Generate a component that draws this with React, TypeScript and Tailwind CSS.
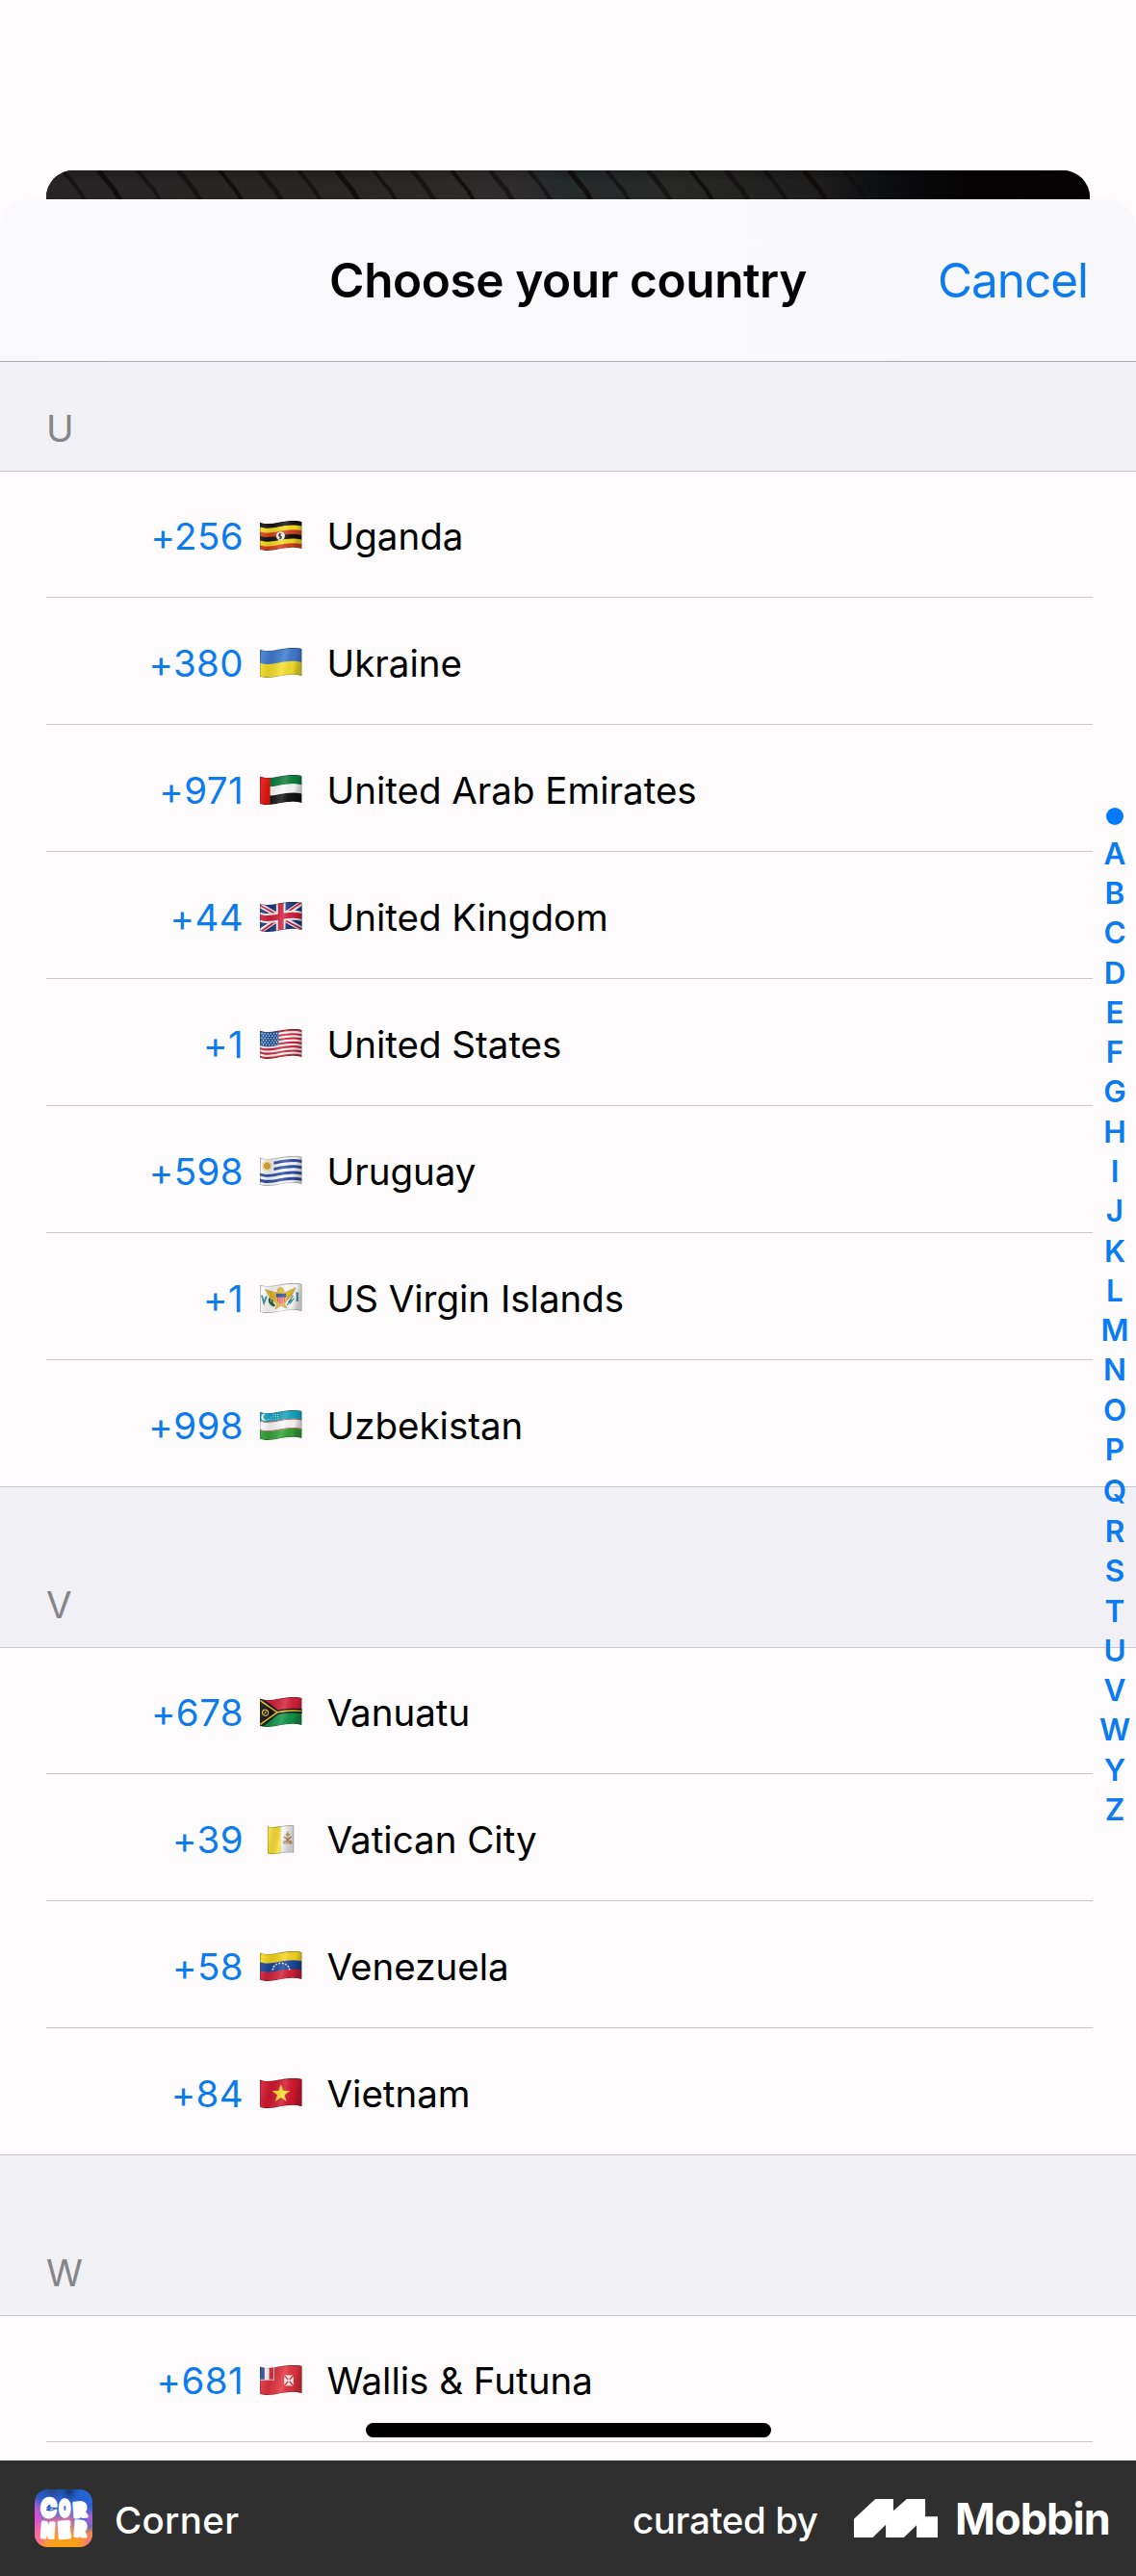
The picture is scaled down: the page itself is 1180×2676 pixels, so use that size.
import React, { useId } from "react";

/* ---------- flags ---------- */

const FLAG_W = 43.5;
const FLAG_H = 28;

// A horizontal band that follows the ripple of the flag cloth.
function band(y0: number, y1: number, h = 1) {
  return [
    `M0 ${y0 + 1.8}`,
    `C13 ${y0 + 1.8 + 4.6 * h} 26 ${y0 + 1.8 - 5 * h} ${FLAG_W} ${y0 + 0.9}`,
    `V${y1 + 0.9}`,
    `C26 ${y1 + 1.8 - 5 * h} 13 ${y1 + 1.8 + 4.6 * h} 0 ${y1 + 1.8}Z`,
  ].join("");
}

function Bands({ colors }: { colors: string[] }) {
  const step = FLAG_H / colors.length;
  return (
    <>
      {colors.map((c, i) => (
        <path key={i} d={band(i * step, (i + 1) * step + (i < colors.length - 1 ? 0.4 : 0))} fill={c} />
      ))}
    </>
  );
}

function starPoints(cx: number, cy: number, r: number, n = 5, inner = 0.4) {
  return Array.from({ length: n * 2 }, (_, i) => {
    const a = (Math.PI * i) / n - Math.PI / 2;
    const q = i % 2 ? r * inner : r;
    return `${(cx + q * Math.cos(a)).toFixed(2)},${(cy + q * Math.sin(a)).toFixed(2)}`;
  }).join(" ");
}

function Cloth({ children }: { children: React.ReactNode }) {
  const id = useId().replace(/[^a-zA-Z0-9]/g, "");
  return (
    <svg viewBox="0 0 43.5 32" className="h-8 w-[43.5px] shrink-0">
      <defs>
        <clipPath id={`c${id}`}>
          <path d={band(0, FLAG_H)} />
        </clipPath>
        <linearGradient id={`g${id}`} x1="0" x2="1" y1="0" y2="0.15">
          <stop offset="0" stopColor="#000" stopOpacity="0.12" />
          <stop offset="0.08" stopColor="#fff" stopOpacity="0.1" />
          <stop offset="0.3" stopColor="#000" stopOpacity="0.1" />
          <stop offset="0.62" stopColor="#fff" stopOpacity="0.16" />
          <stop offset="0.85" stopColor="#000" stopOpacity="0.04" />
          <stop offset="1" stopColor="#000" stopOpacity="0.25" />
        </linearGradient>
      </defs>
      <g clipPath={`url(#c${id})`}>
        {children}
        <rect width="43.5" height="32" fill={`url(#g${id})`} />
        <path d={band(0, FLAG_H)} fill="none" stroke="#000" strokeOpacity="0.32" strokeWidth="1.3" />
      </g>
    </svg>
  );
}

const Uganda = () => (
  <Cloth>
    <Bands colors={["#161412", "#f8dc1c", "#d5401c", "#161412", "#f8dc1c", "#d5401c"]} />
    <circle cx="21.4" cy="15.8" r="4.5" fill="#f4f1ee" />
    <path d="M20 12.8l2.6.6-1.3 1.8 2 1.7-1.5 2.3-2.2-.3 1.2-1.6-1.8-1.6z" fill="#3a3230" />
    <path d="M20.2 12.6l1.8.3-.8 1z" fill="#d5401c" />
  </Cloth>
);

const Ukraine = () => (
  <Cloth>
    <Bands colors={["#3f7bd0", "#f6df2a"]} />
  </Cloth>
);

const Emirates = () => (
  <Cloth>
    <Bands colors={["#0d7f3f", "#fbfbfb", "#141414"]} />
    <rect width="10.6" height="32" fill="#e3120b" />
  </Cloth>
);

const Kingdom = () => (
  <Cloth>
    <rect width="44" height="32" fill="#1b3a83" />
    <path d="M0 3.5L43.5 28M0 30.5L43.5 1" stroke="#f6f3f5" strokeWidth="5" />
    <path d="M0 3.5L21 15M43.5 28L22 17M0 31.3L20 17.5M43.5 0.3L24 13.5" stroke="#d3213d" strokeWidth="1.9" />
    <rect x="16.9" width="9.6" height="32" fill="#f6f3f5" />
    <path d={band(9, 19)} fill="#f6f3f5" />
    <rect x="18.8" width="5.8" height="32" fill="#d3213d" />
    <path d={band(11, 17)} fill="#d3213d" />
  </Cloth>
);

const States = () => {
  const id = useId().replace(/[^a-zA-Z0-9]/g, "");
  return (
    <Cloth>
      <Bands
        colors={Array.from({ length: 13 }, (_, i) => (i % 2 ? "#fbf7f8" : "#cf2338"))}
      />
      <clipPath id={id}>
        <rect width="19.4" height="32" />
      </clipPath>
      <g clipPath={`url(#${id})`}>
        <path d={band(0, 15.1)} fill="#24599f" />
        {Array.from({ length: 6 }, (_, r) =>
          Array.from({ length: 6 }, (_, c) => (
            <circle
              key={`${r}-${c}`}
              cx={2 + c * 3.1 + (r % 2 ? 1.5 : 0)}
              cy={4.5 + r * 2.3 + Math.sin(c / 1.6) * 0.5}
              r="0.66"
              fill="#fff"
            />
          ))
        )}
      </g>
    </Cloth>
  );
};

const Uruguay = () => {
  const id = useId().replace(/[^a-zA-Z0-9]/g, "");
  return (
    <Cloth>
      <Bands
        colors={["#fafafa", "#2d4ea6", "#fafafa", "#2d4ea6", "#fafafa", "#2d4ea6", "#fafafa", "#2d4ea6", "#fafafa"]}
      />
      <clipPath id={id}>
        <rect width="14.4" height="32" />
      </clipPath>
      <g clipPath={`url(#${id})`}>
        <path d={band(0, 15.6)} fill="#f7f7f7" />
      </g>
      <polygon points={starPoints(7.2, 10.2, 6, 12, 0.5)} fill="#e3b431" />
      <circle cx="7.2" cy="10.2" r="2.7" fill="#dba521" stroke="#a87c22" strokeWidth="0.5" />
    </Cloth>
  );
};

const VirginIslands = () => (
  <Cloth>
    <rect width="44" height="32" fill="#fbfbfa" />
    <path d="M1.8 12.5L4.2 20.5L6.8 13.5" fill="none" stroke="#3c8ba3" strokeWidth="1.9" />
    <path d="M38.8 10V18.4" stroke="#3c8ba3" strokeWidth="2" />
    <path d="M37.3 10h3M37.3 18.3h3" stroke="#3c8ba3" strokeWidth="0.8" />
    <path
      d="M5.5 6.5L16.5 10 18.5 8.6 18.8 5.8 21.8 4.3 25 6.6 24.6 9 26.8 9.6 37 4.8 33.5 12.3 27.5 18.5 25.5 22 28 26 21.8 23.2 16 27 17.8 21.6 11.5 16.5z"
      fill="#ecc02c"
      stroke="#a57f22"
      strokeWidth="0.5"
    />
    <path d="M8.5 8.5l8 6M11 12.8l6 4M35 7.5l-7 7M33 12l-5 4" stroke="#b48c22" strokeWidth="0.6" />
    <path d="M17.2 13.5h9.6c.2 4.5-1.4 7.4-4.8 8.8-3.4-1.4-5-4.3-4.8-8.8z" fill="#f2a8ac" />
    <path d="M18.7 14v5.5M20.8 14v7.5M23 14v7.5M25.2 14v5.5" stroke="#d93b47" strokeWidth="0.9" />
    <path d="M16.8 10.8h10.4v3.6H16.8z" fill="#2c4f96" />
    <path d="M10.2 15.5c-1.2 3 0 6.4 4.6 8.2M12.5 17c-.4 3 .6 5.2 3.2 6.2" fill="none" stroke="#2a6136" strokeWidth="2" />
    <path d="M34.5 13l-5.2 7.2M35.5 15.5l-4.5 6M33 17l-5 6" stroke="#2f819b" strokeWidth="1.1" />
  </Cloth>
);

const Uzbekistan = () => (
  <Cloth>
    <path d={band(0, 28)} fill="#fbfbfb" />
    <path d={band(0, 9)} fill="#16a3bd" />
    <path d={band(9, 9.7)} fill="#c4434b" />
    <path d={band(18.2, 18.9)} fill="#c4434b" />
    <path d={band(18.9, 28)} fill="#34a236" />
    <circle cx="5" cy="7.2" r="3.5" fill="#fff" />
    <circle cx="6.5" cy="7" r="3" fill="#16a3bd" />
    {[0, 1, 2, 3, 4].map((c) =>
      [0, 1, 2].map((r) =>
        c + r > 1 ? <circle key={`${c}${r}`} cx={9 + c * 2.4} cy={9.4 - (2 - r) * 2.3 - c * 0.15} r="0.55" fill="#e8fbff" /> : null
      )
    )}
  </Cloth>
);

const Vanuatu = () => (
  <Cloth>
    <Bands colors={["#d5203a", "#119447"]} />
    <path d="M-2 .5L19.5 16.2 L-2 32z" fill="#141312" />
    <path d="M-1 1L18 15.8C27 13.8 33 13.2 44 14.6M-1 31L18 15.8" fill="none" stroke="#141312" strokeWidth="4.6" />
    <path d="M-1 2.6L18 15.8C27 13.8 33 13.2 44 14.6M-1 29.4L18 15.8" fill="none" stroke="#f5cd2c" strokeWidth="1.5" />
    <circle cx="5.6" cy="16.2" r="3.1" fill="none" stroke="#e7c02c" strokeWidth="1.2" />
    <path d="M4.3 18l2.4-3.6M5 15l1.5 2" stroke="#e7c02c" strokeWidth="0.8" />
  </Cloth>
);

const Vatican = () => (
  <svg viewBox="0 0 43.5 32" className="h-8 w-[43.5px] shrink-0">
    <defs>
      <clipPath id="vatican-cloth">
        <path d="M8 2.2C14 5 23 .3 35.2 1.5V29.6C24 28.2 15 32.8 8 30.6Z" />
      </clipPath>
      <linearGradient id="vatican-shade" x1="0.18" x2="0.81" y1="0" y2="0.1">
        <stop offset="0" stopColor="#000" stopOpacity="0.15" />
        <stop offset="0.1" stopColor="#fff" stopOpacity="0.15" />
        <stop offset="0.35" stopColor="#000" stopOpacity="0.08" />
        <stop offset="0.6" stopColor="#fff" stopOpacity="0.2" />
        <stop offset="1" stopColor="#000" stopOpacity="0.2" />
      </linearGradient>
    </defs>
    <g clipPath="url(#vatican-cloth)">
      <rect x="8" width="14" height="32" fill="#f8de35" />
      <rect x="21.8" width="14" height="32" fill="#f8f8f8" />
      <path d="M28.8 7.5v4M26.8 11.2q2-3.4 4 0z" stroke="#b99443" strokeWidth="1" fill="#d9b45a" />
      <path d="M25 19.5l7.5-6.5M32.5 19.5L25 13" stroke="#b58c4b" strokeWidth="1.4" />
      <path d="M25.2 13.5l3.6 2.6 3.6-2.6M28.8 12v9" stroke="#c0695a" strokeWidth="0.9" fill="none" />
      <circle cx="25.8" cy="18.8" r="1.5" fill="none" stroke="#a9a48f" strokeWidth="0.9" />
      <circle cx="31.8" cy="18.8" r="1.5" fill="none" stroke="#c29b4a" strokeWidth="0.9" />
      <rect width="43.5" height="32" fill="url(#vatican-shade)" />
      <path d="M8 2.2C14 5 23 .3 35.2 1.5V29.6C24 28.2 15 32.8 8 30.6Z" fill="none" stroke="#000" strokeOpacity="0.35" strokeWidth="1.2" />
    </g>
  </svg>
);

const Venezuela = () => (
  <Cloth>
    <Bands colors={["#f8d51c", "#1c479c", "#d3203a"]} />
    {Array.from({ length: 8 }, (_, i) => {
      const a = Math.PI + (Math.PI * (i + 0.3)) / 7.6;
      return (
        <polygon
          key={i}
          points={starPoints(22 + 8.6 * Math.cos(a), 20 + 7.2 * Math.sin(a) - 0.5, 1.5)}
          fill="#fff"
        />
      );
    })}
  </Cloth>
);

const Vietnam = () => (
  <Cloth>
    <rect width="44" height="32" fill="#d3172e" />
    <polygon points={starPoints(21.8, 16, 10)} fill="#fbd92c" />
  </Cloth>
);

const Wallis = () => (
  <Cloth>
    <rect width="44" height="32" fill="#e2323f" />
    <rect width="15" height="15.6" fill="#fbf5f6" />
    <rect width="4.8" height="14.8" fill="#2b4c9c" />
    <rect x="9.6" width="4.6" height="14.8" fill="#e2323f" />
    <rect x="25.2" y="10.4" width="9.6" height="11" fill="#fbf3f3" />
    <path d="M25.2 10.4l9.6 11M34.8 10.4l-9.6 11" stroke="#e2323f" strokeWidth="1.5" />
    <circle cx="30" cy="15.9" r="1.3" fill="#fbf3f3" />
  </Cloth>
);

/* ---------- data ---------- */

type Country = { code: string; name: string; Flag: () => React.ReactElement };

const sections: { letter: string; countries: Country[] }[] = [
  {
    letter: "U",
    countries: [
      { code: "+256", name: "Uganda", Flag: Uganda },
      { code: "+380", name: "Ukraine", Flag: Ukraine },
      { code: "+971", name: "United Arab Emirates", Flag: Emirates },
      { code: "+44", name: "United Kingdom", Flag: Kingdom },
      { code: "+1", name: "United States", Flag: States },
      { code: "+598", name: "Uruguay", Flag: Uruguay },
      { code: "+1", name: "US Virgin Islands", Flag: VirginIslands },
      { code: "+998", name: "Uzbekistan", Flag: Uzbekistan },
    ],
  },
  {
    letter: "V",
    countries: [
      { code: "+678", name: "Vanuatu", Flag: Vanuatu },
      { code: "+39", name: "Vatican City", Flag: Vatican },
      { code: "+58", name: "Venezuela", Flag: Venezuela },
      { code: "+84", name: "Vietnam", Flag: Vietnam },
    ],
  },
  { letter: "W", countries: [{ code: "+681", name: "Wallis & Futuna", Flag: Wallis }] },
];

const indexLetters = "ABCDEFGHIJKLMNOPQRSTUVWYZ".split("");

/* ---------- pieces ---------- */

// The top edge of the photo card behind the sheet: dark slats fading to black.
function PhotoCard() {
  const slats = [68, 105, 146, 188, 231, 272, 313, 352, 391, 431, 472, 512, 552, 594, 633, 676, 720, 757, 797, 838, 880];
  return (
    <div className="ml-12 mr-[48.5px] h-[30px] overflow-hidden rounded-t-[28px] bg-[#232122]">
      <svg viewBox="48 0 1084 30" className="block h-[30px] w-[1084px]">
        <defs>
          <linearGradient id="card" x1="0" x2="1">
            <stop offset="0" stopColor="#262425" />
            <stop offset="0.25" stopColor="#272624" />
            <stop offset="0.45" stopColor="#2e2c2c" />
            <stop offset="0.5" stopColor="#252a2b" />
            <stop offset="0.6" stopColor="#282827" />
            <stop offset="0.74" stopColor="#1d1d1d" />
            <stop offset="0.8" stopColor="#0d0e10" />
            <stop offset="0.88" stopColor="#050304" />
            <stop offset="1" stopColor="#040203" />
          </linearGradient>
          <linearGradient id="cardTop" x1="0" x2="0" y1="0" y2="1">
            <stop offset="0" stopColor="#000" stopOpacity="0.2" />
            <stop offset="0.4" stopColor="#000" stopOpacity="0" />
          </linearGradient>
        </defs>
        <rect x="48" width="1084" height="30" fill="url(#card)" />
        {slats.map((x, i) => (
          <path
            key={x}
            d={`M${x - 3} 0C${x + 4} 8 ${x + 8} ${13 + (i % 3)} ${x + 11} 17S${x + 17} 26 ${x + 20} 31`}
            fill="none"
            stroke="#0f0d0c"
            strokeOpacity={i % 3 === 1 ? 0.9 : 0.65}
            strokeWidth={i % 2 ? 5 : 4}
          />
        ))}
        <rect x="48" width="1084" height="30" fill="url(#cardTop)" />
      </svg>
    </div>
  );
}

function SectionHeader({ letter, first }: { letter: string; first: boolean }) {
  return (
    <div
      className={`flex items-end border-b border-[#c8c7cc] bg-[#f1f0f5] pb-[21px] pl-12 ${first ? "h-[114px]" : "h-[167px]"}`}
    >
      <span className="text-[38.5px] leading-[46px] text-[#85858a]">{letter}</span>
    </div>
  );
}

function CountryRow({ country, first, last }: { country: Country; first: boolean; last: boolean }) {
  const { code, name, Flag } = country;
  return (
    <div className={last ? "border-b border-[#c6c6ca]" : "ml-12 mr-[45px] border-b border-[#c6c6c8]"}>
      <div className={`flex items-end pb-10 text-[38.5px] leading-[46px] ${first ? "h-[130px]" : "h-[131px]"}`}>
        <span
          className={`shrink-0 text-right tracking-[0.4px] text-[#0b7bee] ${last ? "w-[253px]" : "ml-0 w-[205px]"}`}
        >
          {code}
        </span>
        <span className="ml-[17px] flex h-[46px] shrink-0 items-center">
          <Flag />
        </span>
        <span className="ml-[26px] text-black">{name}</span>
      </div>
    </div>
  );
}

function IndexRail() {
  return (
    <nav className="absolute right-0 top-[839px] flex w-11 flex-col items-center font-semibold text-[#0a7bf2]">
      <span className="mb-[9px] size-[18px] rounded-full bg-[#007aff]" />
      {indexLetters.map((l) => (
        <span
          key={l}
          className={`flex items-center justify-center text-[31.5px] leading-none ${l === "Q" ? "h-[44px]" : "h-[41.27px]"}`}
        >
          {l}
        </span>
      ))}
    </nav>
  );
}

function CornerIcon() {
  return (
    <svg viewBox="0 0 60 60" className="size-[60px] shrink-0">
      <defs>
        <clipPath id="tile">
          <rect width="60" height="60" rx="13.5" />
        </clipPath>
        <linearGradient id="tileBase" x1="0" x2="0.15" y1="0" y2="1">
          <stop offset="0" stopColor="#1b55b4" />
          <stop offset="0.4" stopColor="#3f68dc" />
          <stop offset="0.62" stopColor="#e8739e" />
          <stop offset="0.8" stopColor="#f98d4e" />
          <stop offset="1" stopColor="#f99c1c" />
        </linearGradient>
        <filter id="soft" x="-50%" y="-50%" width="200%" height="200%">
          <feGaussianBlur stdDeviation="3.5" />
        </filter>
      </defs>
      <g clipPath="url(#tile)">
        <rect width="60" height="60" fill="url(#tileBase)" />
        <g filter="url(#soft)">
          <rect x="32" y="-4" width="9" height="12" fill="#0f2e5f" />
          <rect x="14" y="-4" width="8" height="10" fill="#2a3f70" />
          <rect x="42" y="-2" width="20" height="44" fill="#2463d6" />
          <ellipse cx="1" cy="28" rx="6" ry="16" fill="#e04fd0" />
          <ellipse cx="2" cy="50" rx="7" ry="10" fill="#f767a8" />
          <ellipse cx="57" cy="30" rx="5" ry="5" fill="#b95be0" />
          <ellipse cx="58" cy="55" rx="7" ry="7" fill="#f36f8c" />
          <ellipse cx="30" cy="56" rx="18" ry="7" fill="#fa9f12" />
        </g>
        <g
          fill="#fff"
          stroke="#fff"
          strokeWidth="3.4"
          strokeLinejoin="round"
          fontFamily="Inter, sans-serif"
          fontWeight="900"
        >
          <text x="6.5" y="28.5" textLength="16" lengthAdjust="spacingAndGlyphs" fontSize="26" transform="rotate(4 14 20)">C</text>
          <text x="25.5" y="27.5" textLength="11.5" lengthAdjust="spacingAndGlyphs" fontSize="23">O</text>
          <text x="40.5" y="28.5" textLength="13" lengthAdjust="spacingAndGlyphs" fontSize="20" transform="rotate(-5 47 20)">R</text>
          <text x="7" y="50" textLength="13.5" lengthAdjust="spacingAndGlyphs" fontSize="21" transform="rotate(4 14 42)">N</text>
          <text x="25" y="50" textLength="12" lengthAdjust="spacingAndGlyphs" fontSize="22" transform="rotate(-4 31 42)">E</text>
          <text x="41.5" y="48.5" textLength="12" lengthAdjust="spacingAndGlyphs" fontSize="21" transform="rotate(3 47 42)">R</text>
        </g>
        <path d="M12.5 19.5c.4-2 2-2 2.200-.3M12 21.500h3M19 20.500c1.500-1.500 2.500 0 1.800.8M12.500 20c3 2.800 6 2.400 8.500 0" fill="none" stroke="#24479c" strokeWidth="0.9" />
      </g>
    </svg>
  );
}

function MobbinMark() {
  return (
    <svg viewBox="0 0 87.3 40" className="h-10 w-[87.3px] shrink-0 fill-white">
      <path d="M0 20.7L22.2 0H41V12.3L54.9 0H74.1V18.3H87.3V40H65.1V27.3L51.9 40H33.1V26.7L19.6 40H0Z" />
    </svg>
  );
}

function Footer() {
  return (
    <footer className="flex h-[120px] shrink-0 items-center bg-[#2f2f2f] pl-9 pr-[27px] text-white">
      <CornerIcon />
      <span className="ml-[23px] pt-[4px] text-[38.5px] font-medium leading-[46px] tracking-[0.3px]">Corner</span>
      <span className="ml-auto pt-[4px] text-[38.5px] font-medium leading-[46px] tracking-[-0.4px]">curated by</span>
      <span className="ml-[37px] flex items-center">
        <MobbinMark />
        <span className="ml-[18px] pt-[2px] text-[45px] font-bold leading-[54px] tracking-[-0.9px]">Mobbin</span>
      </span>
    </footer>
  );
}

export default function App() {
  return (
    <div className="relative flex h-[2676px] w-[1180px] flex-col overflow-hidden bg-[#fdfbfc] font-['Inter',sans-serif]">
      <div className="h-[177px] shrink-0" />
      <PhotoCard />

      <header className="grid h-[169px] shrink-0 grid-cols-[1fr_auto_1fr] items-center rounded-t-[30px] border-b border-[#a9a8ac] bg-linear-to-r from-[#f9f9fb] to-[#f8f7fa] px-12">
        <span />
        <h1 className="text-[49.5px] font-semibold leading-[60px] tracking-[-0.4px] text-black">Choose your country</h1>
        <button className="mr-[2px] justify-self-end text-[49.5px] leading-[60px] tracking-[-1.05px] text-[#0b7bee]">
          Cancel
        </button>
      </header>

      <main className="min-h-0 flex-1 overflow-hidden">
        {sections.map((s, si) => (
          <section key={s.letter}>
            <SectionHeader letter={s.letter} first={si === 0} />
            {s.countries.map((c, i) => (
              <CountryRow
                key={c.name}
                country={c}
                first={i === 0}
                last={i === s.countries.length - 1 && si < sections.length - 1}
              />
            ))}
          </section>
        ))}
      </main>

      <IndexRail />
      <div className="absolute bottom-[144px] left-[380px] h-[15px] w-[421px] rounded-full bg-black" />
      <Footer />
    </div>
  );
}
